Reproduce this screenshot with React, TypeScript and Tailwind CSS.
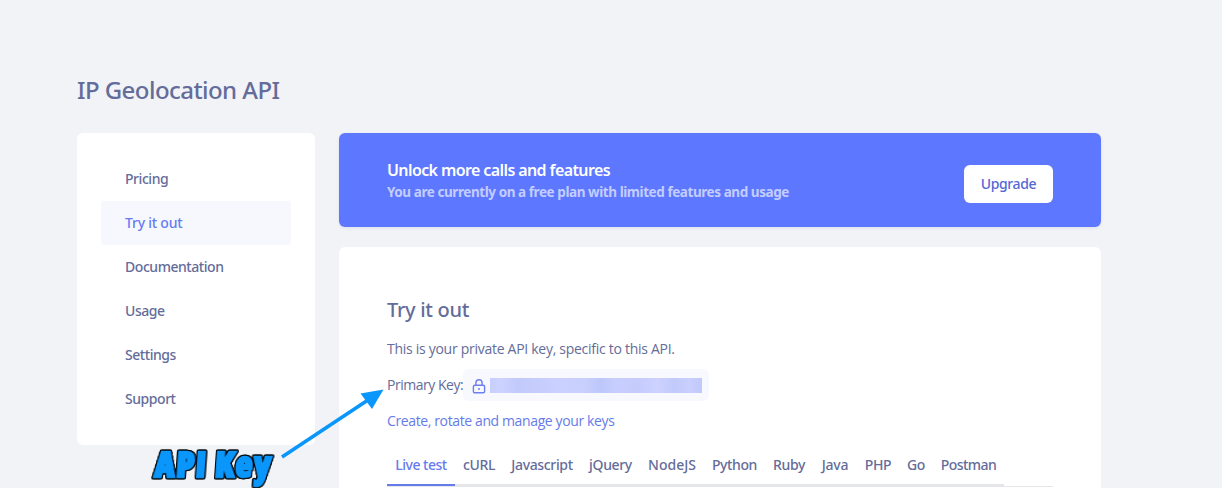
const navItems = ["Pricing", "Try it out", "Documentation", "Usage", "Settings", "Support"];

const tabs: { label: string; className: string }[] = [
  { label: "Live test", className: "w-[68px] tracking-[-0.5px]" },
  { label: "cURL", className: "w-[48px] tracking-[-0.35px]" },
  { label: "Javascript", className: "w-[78px] tracking-[-0.35px]" },
  { label: "jQuery", className: "w-[59px] tracking-[-0.35px]" },
  { label: "NodeJS", className: "w-[64px] tracking-[0px]" },
  { label: "Python", className: "w-[61px] tracking-[-0.4px]" },
  { label: "Ruby", className: "w-[48px] tracking-[-0.3px]" },
  { label: "Java", className: "w-[44px] tracking-[-0.3px]" },
  { label: "PHP", className: "w-[42px] tracking-[-0.3px]" },
  { label: "Go", className: "w-[34px] tracking-[-0.3px]" },
  { label: "Postman", className: "w-[71px] tracking-[-0.55px]" },
];

function LockIcon() {
  return (
    <svg className="h-[15px] w-[14px]" viewBox="0 0 14 15" fill="none" stroke="#6b7ff0" strokeWidth="1.4">
      <rect x="1.4" y="6.2" width="11.2" height="7.6" rx="1.4" />
      <path d="M3.9 6.2V3.9a3.1 3.1 0 0 1 6.2 0v2.3" />
      <circle cx="7" cy="10" r="1" fill="#6b7ff0" stroke="none" />
    </svg>
  );
}

function Sidebar() {
  return (
    <nav className="flex h-[312px] w-[238px] flex-col rounded-md bg-white px-6 pt-6">
      {navItems.map((item) => (
        <a
          key={item}
          className={
            item === "Try it out"
              ? "flex h-11 w-[190px] items-center rounded-[3px] bg-[#f6f8fe] pb-[2px] pl-6 tracking-[-0.22px] text-[#667bf0]"
              : "flex h-11 w-[190px] items-center pb-[2px] pl-6 tracking-[-0.45px]"
          }
        >
          {item}
        </a>
      ))}
    </nav>
  );
}

function Banner() {
  return (
    <section className="flex h-[94px] justify-between rounded-md bg-[#5d78ff] pr-12 pl-12 shadow-[0_1px_3px_rgba(80,90,140,0.12)]">
      <div className="pt-[26px]">
        <h2 className="text-[16px] leading-[22px] font-semibold tracking-[-0.6px] text-white">
          Unlock more calls and features
        </h2>
        <p className="text-[13.5px] leading-[22px] font-bold tracking-[-0.43px] text-[#c3cdff]">
          You are currently on a free plan with limited features and usage
        </p>
      </div>
      <button className="mt-8 flex h-[38px] w-[89px] items-center justify-center rounded-md bg-white pb-[2px] tracking-[-0.35px] text-[#5567d5]">
        Upgrade
      </button>
    </section>
  );
}

function TryItOut() {
  return (
    <section className="h-[260px] rounded-md bg-white px-12 pt-[50px]">
      <h2 className="text-[20px] leading-[26px] tracking-[-0.3px]">Try it out</h2>
      <p className="mt-[16px] font-['Open_Sans',sans-serif] leading-[20px] font-normal tracking-[-0.28px]">
        This is your private API key, specific to this API.
      </p>
      <div className="mt-[10px] flex h-8 items-center font-['Open_Sans',sans-serif] font-normal">
        <span className="w-[76px] pb-[2px] whitespace-nowrap tracking-[-0.48px]">Primary Key:</span>
        <span className="flex h-8 w-[246px] items-center rounded-md bg-[#f8f9fe] pl-[9px]">
          <span className="mt-[3px]">
            <LockIcon />
          </span>
          <span className="ml-[4px] h-[15px] w-[212px] bg-[linear-gradient(90deg,#c8cffd_0,#cdd3ff_5%,#c2cafb_13%,#c5cdfc_22%,#cbd1ff_33%,#c8cffd_45%,#bdc7fa_52%,#c8cffe_60%,#c5ccfc_70%,#cdd2ff_79%,#c1cafb_87%,#c9cffe_94%,#c0c9fb_100%)]" />
        </span>
      </div>
      <a className="mt-[10px] block font-['Open_Sans',sans-serif] leading-[20px] font-normal tracking-[-0.38px] text-[#667bea]">
        Create, rotate and manage your keys
      </a>
      <div className="mt-[15px] flex h-[41px] items-end border-b border-[#e4e6ea]">
        <div className="-mb-px flex">
          {tabs.map((tab, i) => (
            <div
              key={tab.label}
              className={
                (i === 0
                  ? "border-[#667bea] text-[#667bf0] mb-px border-b-2 h-[40px] "
                  : "border-[#e4e6ea] border-b-3 h-[41px] ") +
                "flex items-start justify-center pt-[9px] leading-[20px] whitespace-nowrap " +
                tab.className
              }
            >
              {tab.label}
            </div>
          ))}
        </div>
      </div>
    </section>
  );
}

function Callout() {
  return (
    <>
      <svg className="absolute top-[380px] left-[275px] h-[84px] w-[115px]" viewBox="0 0 115 84">
        <path d="M7 77 93 20" stroke="#0a96fb" strokeWidth="3.6" />
        <path d="M108.5 9.5 85.5 13.5 97 29Z" fill="#0a96fb" />
      </svg>
      <div className="absolute top-[443px] left-[155px] -skew-x-4 font-['Open_Sans',sans-serif] text-[35px] leading-[42px] font-extrabold whitespace-nowrap text-[#0a96fb] [filter:drop-shadow(1px_0_0_#000)_drop-shadow(-1px_0_0_#000)_drop-shadow(0_1px_0_#000)_drop-shadow(0_-1px_0_#000)] [font-stretch:75%] tracking-[1.4px] [-webkit-text-stroke:2.4px_#0a96fb]">
        API Key
      </div>
    </>
  );
}

export default function App() {
  return (
    <div className="relative h-[488px] w-[1222px] overflow-hidden bg-[#f1f3f7] pl-[77px] font-['Noto_Sans',sans-serif] text-[14px] font-medium text-[#646c9a]">
      <h1 className="pt-[73px] text-[24px] leading-[34px] tracking-[-0.55px]">IP Geolocation API</h1>
      <main className="mt-[26px] flex gap-6">
        <Sidebar />
        <div className="flex w-[762px] flex-col gap-5">
          <Banner />
          <TryItOut />
        </div>
      </main>
      <Callout />
    </div>
  );
}
